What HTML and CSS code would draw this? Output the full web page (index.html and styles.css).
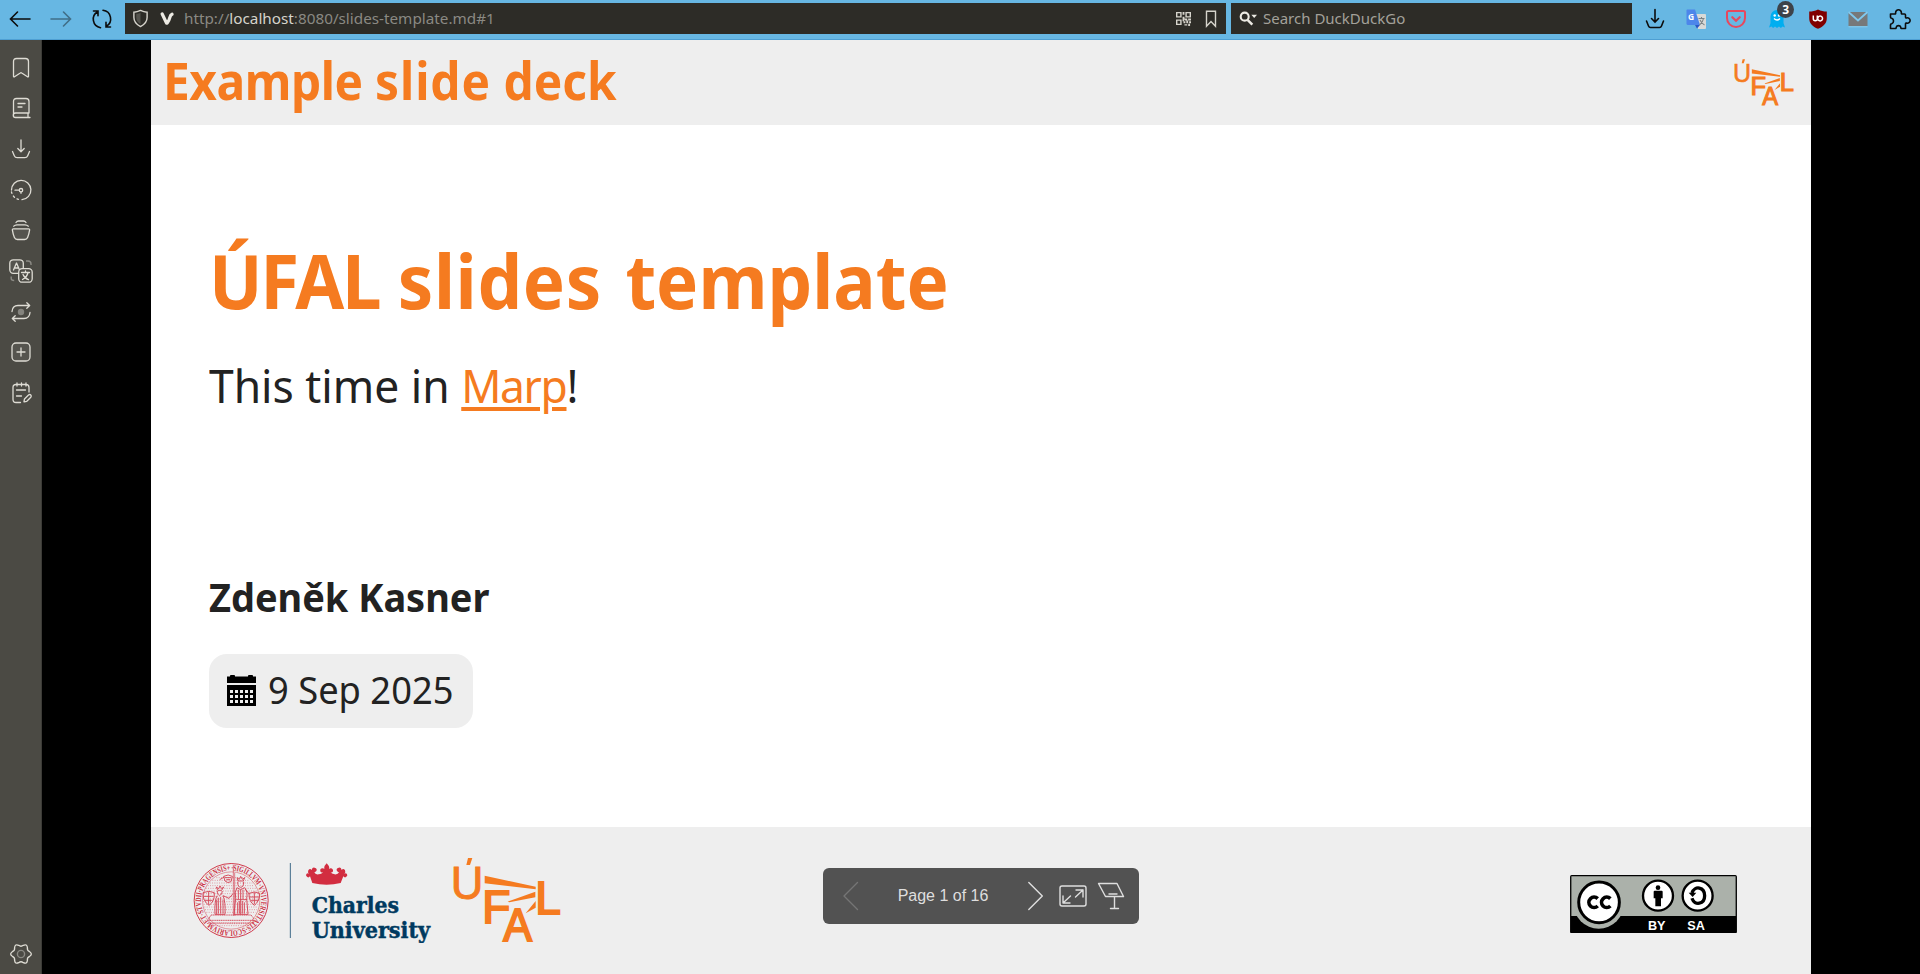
FILE: index.html
```html
<!DOCTYPE html>
<html lang="en">
<head>
<meta charset="utf-8">
<title>ÚFAL slides template</title>
<link rel="stylesheet" href="styles.css">
</head>
<body>
<header class="toolbar">
  <nav class="nav">
    <svg class="i" viewBox="0 0 24 24"><path d="M22 12H2.500M9.500 5l-7 7 7 7"/></svg>
    <svg class="i dim" viewBox="0 0 24 24"><path d="M2 12h19.500M14.500 5l7 7-7 7"/></svg>
    <svg class="i" viewBox="0 0 24 24"><path d="M7.700 4.700A8.600 8.600 0 0 0 10.500 20.700M3.500 4H8v4.800M13 3.300A8.600 8.600 0 0 1 16.300 19.300M20.500 20H16v-4.800"/></svg>
  </nav>
  <div class="urlbar">
    <svg class="i16" viewBox="0 0 18 20"><path d="M9 1.500C6 3 4 3.300 2 3.300V9c0 5 3 7.500 7 9.500 4-2 7-4.500 7-9.500V3.300c-2 0-4-.3-7-1.800z" fill="none" stroke="#d6d4cc" stroke-width="1.500"/><path d="M9 4v12c-3-1.700-4.500-3.800-4.500-7V5C6.500 5 7.800 4.700 9 4z" fill="#55544e"/></svg>
    <svg class="vee" viewBox="0 0 14 13"><path d="M2.200 2l4.300 9M12 2.200C9 3.500 11 6 7.200 11" fill="none" stroke="#eceae3" stroke-width="3.200" stroke-linecap="round"/></svg>
    <span class="url"><span class="fit url-text">http://<b>localhost</b>:8080/slides-template.md#1</span></span>
    <svg class="qr" viewBox="0 0 16 16"><path fill="#d6d4cc" fill-rule="evenodd" d="M0 1h6v6H0zM1.500 2.500v3h3v-3zM10 1h6v6h-6zM11.500 2.500v3h3v-3zM0 9h6v6H0zM1.500 10.500v3h3v-3zM7 1h2v3H7zM7 6h2v3H7zM9 8h3v2H9zM13 8h3v2h-3zM8 11h2v2H8zM11 10h2v3h-2zM14 11h2v2h-2zM9 14h3v1.500H9zM13 13.500h2V16h-2zM7 9h1.500v2H7z"/></svg>
    <svg class="mark" viewBox="0 0 12 18"><path d="M1.500 1.200h9v15L6 11.500l-4.500 4.700z" fill="none" stroke="#d6d4cc" stroke-width="1.400"/></svg>
  </div>
  <div class="search">
    <svg class="mag" viewBox="0 0 20 16"><circle cx="6" cy="5.500" r="4.200" fill="none" stroke="#eceae3" stroke-width="2.200"/><path d="M9 9l5 5" stroke="#eceae3" stroke-width="2.600"/><path d="M13 3.500h6l-3 3.500z" fill="#eceae3"/></svg>
    <span class="fit">Search DuckDuckGo</span>
  </div>
  <div class="ext">
    <svg class="i" viewBox="0 0 24 24"><path d="M12 2.500v12M8.500 11.500L12 15l3.500-3.500M3.500 14l2 5q.6 1.500 2 1.500h9q1.400 0 2-1.500l2-5"/></svg>
    <svg viewBox="0 0 24 24"><path d="M10 7h11a1 1 0 0 1 1 1v13a1 1 0 0 1-1 1h-7z" fill="#d9dad8"/><path d="M3 2.500h8L16 18H4a1.500 1.500 0 0 1-1.500-1.500V3z" fill="#4d86ea"/><path d="M11 18h5l-3 3.500z" fill="#2a56c6"/><text x="4" y="13" font-family="Open Sans, sans-serif" font-weight="700" font-size="8.500" fill="#fff">G</text><path d="M14.500 11.500h6M17.500 10v1.500M19.500 11.500c-.5 3-2 5-4 6.500M16 13c1 2 2.500 4 4.500 5" stroke="#7b8285" stroke-width="1.100" fill="none"/></svg>
    <svg viewBox="0 0 24 24"><path d="M4.500 4h15a1.500 1.500 0 0 1 1.500 1.500V11a9 9 0 0 1-18 0V5.500A1.500 1.500 0 0 1 4.500 4z" fill="none" stroke="#e8475d" stroke-width="2"/><path d="M8.300 10.200l3.700 3.500 3.700-3.500" fill="none" stroke="#e8475d" stroke-width="2.200" stroke-linecap="round"/></svg>
    <span class="ghost"><svg viewBox="0 0 24 24"><path d="M5.500 16V9.500a6.500 6.500 0 0 1 13 0V16l1.500 4.500-2.500-1-1.600 1.500-1.900-1.600-2 1.600-2-1.600L8.100 21l-1.600-1.500-2.500 1z" fill="#00aef0"/><circle cx="9.700" cy="8.500" r="1.200" fill="#fff"/><circle cx="14" cy="8.500" r="1.200" fill="#fff"/><path d="M9 11.500q3 3 6 0" fill="none" stroke="#fff" stroke-width="1.300"/></svg><b class="count">3</b></span>
    <svg viewBox="0 0 24 24"><path d="M12 2.500c3 1.600 5.500 2 8.800 2V11c0 5.500-3.300 8.500-8.800 10.800C6.500 19.500 3.200 16.500 3.200 11V4.500c3.300 0 5.800-.4 8.800-2z" fill="#800000"/><path d="M7.300 8.500v3.200a2 2 0 0 0 4 0V8.500M16.500 11a2.400 2.400 0 1 1-4.700 0 2.400 2.400 0 0 1 4.700 0z" fill="none" stroke="#fff" stroke-width="1.500"/></svg>
    <svg viewBox="0 0 24 24"><path d="M2.500 5h19v14h-19z" fill="#77797a"/><path d="M2.500 5l9.500 8.500L21.500 5" fill="none" stroke="#7fc8ee" stroke-width="1.800"/><path d="M2.500 19.800h19" stroke="#8ccbe9"/></svg>
    <svg class="i" viewBox="0 0 24 24"><path d="M3.500 7h4.200q1.200 0 .9-1.300a2.900 2.900 0 1 1 5.800 0Q14.100 7 15.300 7h2.200q1 0 1 1v2q0 1.200 1.200.9a2.700 2.700 0 1 1 0 5.200q-1.200-.3-1.200.9v4.500h-3.800q-1 0-.9-1.200a2.400 2.400 0 0 0-4.600 0q.1 1.200-.9 1.200H3.500v-3.800q0-1 1.200-1a2.900 2.900 0 0 0 0-5.400q-1.200 0-1.200-1z" stroke-linejoin="round"/></svg>
  </div>
</header>

<div class="body">
  <aside class="side">
    <svg viewBox="0 0 24 24"><path class="t" d="M7.500 2.500h9q3 0 3 3v14.800q0 1-1 .5L12.700 17q-.7-.5-1.400 0l-5.800 3.800q-1 .5-1-.5V5.500q0-3 3-3z"/></svg>
    <svg viewBox="0 0 24 24"><path class="t" d="M20 17H6.500a2 2 0 0 0 0 4.500H21M4.500 19.500v-14q0-3 3-3h9.500q3 0 3 3V17M19 17v4.500M9 7.500h7M9 11h4"/></svg>
    <svg viewBox="0 0 24 24"><path class="n" d="M12 3v11.500M8.800 11.500L12 14.700l3.200-3.200M3.500 14.500l1.800 4.300q.8 1.900 2.800 1.900h7.800q2 0 2.800-1.900l1.800-4.300"/></svg>
    <svg viewBox="0 0 24 24"><path class="n" d="M2.500 12A9.700 9.700 0 1 1 13 21.700"/><path class="n" stroke-dasharray="1.500 3" d="M2.500 14a9.700 9.700 0 0 0 9 7.700"/><path class="n" d="M6 12.200h4M12 14v1.300"/><circle class="n" cx="12" cy="12.200" r="1.700"/></svg>
    <svg viewBox="0 0 24 24"><path class="t" d="M4.500 10.800h15q1.300 0 1.100 1.300-.6 4-2 7.300-.9 2.100-3 2.100H8.400q-2.100 0-3-2.100-1.400-3.300-2-7.300-.2-1.300 1.100-1.300z"/><path class="n" d="M4.800 8.200Q6 6.800 8 6.800h8q2 0 3.200 1.400M7 4.500q1-1.500 2.500-1.500h5Q16 3 17 4.500"/></svg>
    <svg viewBox="0 0 24 24"><rect class="t" x=".8" y=".8" width="13.500" height="13.500" rx="3.500"/><path class="n" d="M4.500 11L7.500 4l3 7M5.500 9h4"/><path class="g" d="M17 2h2q3 0 3 3v1M2.200 17.500v2q0 2 3 2"/><rect x="9.700" y="9.700" width="13.500" height="13.500" rx="3.500" fill="#4b4a44" stroke="#dedcd4" stroke-width="1.300"/><path class="n" d="M12.500 13.500h8M16.500 12v1.500M19 13.500c-.6 3-2.500 5.500-5.500 7M14 15.500c1 2.500 3 4.300 5.500 5.200"/></svg>
    <svg viewBox="0 0 24 24"><path class="n" d="M3 11.500Q3.500 5.500 9 5.500h11.500M17.800 2.800l2.900 2.700-2.900 2.700M21 12.500q-.5 6-6 6H3.500M6.200 15.800l-2.900 2.700 2.900 2.700"/><circle cx="12" cy="12" r="3.200" fill="#85847e"/></svg>
    <svg viewBox="0 0 24 24"><rect class="t" x="3" y="3" width="18" height="18" rx="4"/><path class="n" d="M12 8v8M8 12h8"/></svg>
    <svg viewBox="0 0 24 24"><path class="n" d="M11.500 21.500H7q-3 0-3-3v-12q0-3 3-3h10q3 0 3 3V11M8 2v3M12.500 2v3M17 2v3M7.500 9h9M7.500 15h5M15 20.500l.5-2.500 4-4q1.300-1 2.300 0t0 2.300l-4 4-2.700.6z"/></svg>
    <svg class="gear" viewBox="0 0 24 24"><path class="n" d="M20.700 14.300Q17.900 15.400 18.400 18.400Q18 22.400 14.300 20.700Q12 18.800 9.700 20.700Q6 22.400 5.600 18.400Q6.100 15.400 3.300 14.300Q0 12 3.300 9.700Q6.100 8.600 5.600 5.600Q6 1.600 9.700 3.300Q12 5.200 14.300 3.300Q18 1.600 18.400 5.600Q17.900 8.600 20.700 9.700Q24 12 20.700 14.300z"/><circle class="g" cx="12" cy="12" r="3.600"/></svg>
  </aside>

  <main class="stage">
    <article class="slide">
      <header class="top">
        <span class="fit deck"><span class="snug">Example</span> <span class="loose">slide</span> deck</span>
        <svg class="logo-s" viewBox="820 37 322 255">
          <g class="ufal"><text x="813" y="162" class="thin" textLength="98" lengthAdjust="spacingAndGlyphs">U</text><text x="908" y="235">F</text><text x="971" y="288" textLength="86" lengthAdjust="spacingAndGlyphs">A</text><text x="1067" y="208">L</text></g>
          <path class="rays" d="M865 39h13l-7 21h-11zM915 92l153 33v8l-153-18zM984 170l83-30v17l-78 15zM1068 168v20l-30 17z"/>
        </svg>
      </header>
      <section class="content">
        <h1><span class="fit h1t"><span class="w1">ÚFAL</span> <span class="w2">slides</span> template</span></h1>
        <p class="lead"><span class="fit leadt">This time in <a href="#">Marp</a>!</span></p>
        <p class="author"><span class="fit authort">Zdeněk Kasner</span></p>
        <div class="date">
          <svg class="cal" viewBox="0 0 29 32"><path fill-rule="evenodd" d="M0 1.500h3V.8Q3 0 4 0h3q1 0 1 .8v.7h13V.8Q21 0 22 0h3q1 0 1 .8v.7h3V8H0zM0 10h29v21H0zM3 15v3h3v-3zm5 0v3h3v-3zm5 0v3h3v-3zm5 0v3h3v-3zm5 0v3h3v-3zM3 20v3h3v-3zm5 0v3h3v-3zm5 0v3h3v-3zm5 0v3h3v-3zm5 0v3h3v-3zM3 25v3h3v-3zm5 0v3h3v-3zm5 0v3h3v-3zm5 0v3h3v-3zm5 0v3h3v-3z"/></svg>
          <span class="fit datet">9 Sep 2025</span>
        </div>
      </section>
      <footer class="foot">
        <svg class="logos" viewBox="40 36 1104 258">
          <g fill="none" stroke="#d03a4b">
            <circle cx="154.500" cy="166.500" r="111" stroke-width="3"/>
            <circle cx="154.500" cy="166.500" r="86" stroke-width="1.500"/>
          </g>
          <path id="ring" d="M154.500 76.500a90 90 0 0 1 0 180a90 90 0 0 1 0-180" fill="none"/>
          <text class="seal"><textPath href="#ring" textLength="562" lengthAdjust="spacingAndGlyphs">·SIGILLVM·VNIVERSITATIS·SCOLARIVM·ET·STVDII·PRAGENSIS+</textPath></text>
          <g fill="none" stroke="#d34556" stroke-width="2.800">
            <path stroke-width="1.500" stroke-dasharray="3 4" d="M110 98h88M98 106h112M90 114h128M84 122h138M78 130h152M74 138h158M72 146h164M70 154h168M70 162h168M70 170h168M72 178h164M74 186h160M76 194h156M80 202h148M86 236h134M98 242h112"/>
            <path d="M161 60v152M165 84v128" stroke-width="2"/>
            <path d="M88 220l6-10h120l8 10v14H88zM90 226h130" stroke-dasharray="4 1.500"/>
            <path d="M70 143q18-8 34 0 2 26-16 38-19-12-18-38zM87 140v38M72 154h30M75 166h24M208 145q16-8 32 0 0 24-16 36-17-12-16-36zM224 142v36M209 156h29M213 166h24"/>
            <path d="M110 126l4 10h12l6-10-6 5-5-8-4 8zM113 138q0 13 7 13t8-13M112 152q-8 16-6 56h30q2-38-6-56l18 8 12-14M111 164v44M116 158v48M123 156v50M130 164v42"/>
            <path d="M172 98l3 10h16l4-10-7 5-5-9-4 9zM174 110q0 17 9 17t9-17M172 128q-8 12-4 32l-5 48h42l-4-48q4-20-6-32l-12 6zM176 134v28M183 134v74M190 134v28M170 164h32M174 172v34M179 168v38M188 168v38M194 172v34M196 132l14 16"/>
            <path d="M132 94q14-8 26 0l-4 16q-10 6-18-2zM136 98h18M140 104h12M120 104l14-8"/>
          </g>
          <path d="M332 54v225" stroke="#3f6a88" stroke-width="3"/>
          <path fill="#d22d40" d="M398 114l-7-20q-4 5-8 2-6-3-3-9 5-4 8 0-5-5-2-11 5-8 10-1 2-9 9-7 9 3 5 10-2 3-6 4 3 8 13 6 11-1 12-7-5 3-7-2-2-9 7-9 3 0 5 2-1-6 1-10l6-7 6 7q3 4 1 10 2-2 5-2 8 1 7 9-2 5-7 2 2 6 12 7 10 1 13-6-4-1-6-4-4-7 5-10 7-2 9 7 5-7 10 1 3 6-2 11 3-4 8 0 3 6-3 9-4 3-8-2l-8 20q-42 10-85 0z"/>
          <g class="cu"><text x="396" y="204" textLength="262" lengthAdjust="spacingAndGlyphs">Charles</text><text x="396" y="278" textLength="355" lengthAdjust="spacingAndGlyphs">University</text></g>
          <g class="ufal"><text x="813" y="162" class="thin" textLength="98" lengthAdjust="spacingAndGlyphs">U</text><text x="908" y="235">F</text><text x="971" y="288" textLength="86" lengthAdjust="spacingAndGlyphs">A</text><text x="1067" y="208">L</text></g>
          <path class="rays" d="M865 39h13l-7 21h-11zM915 92l153 33v8l-153-18zM984 170l83-30v17l-78 15zM1068 168v20l-30 17z"/>
        </svg>
        <svg class="cc" viewBox="0 0 501 175">
          <rect width="501" height="175" rx="5"/>
          <path fill="#abb1aa" d="M4 4h493v119H4z"/>
          <circle cx="86" cy="85" r="76" fill="#abb1aa"/>
          <circle cx="87" cy="82" r="61" fill="#fff" stroke="#000" stroke-width="9"/>
          <path fill="none" stroke="#000" stroke-width="11" d="M83 71a15.500 15.500 0 1 0 0 22M121 71a15.500 15.500 0 1 0 0 22"/>
          <circle cx="264" cy="62" r="45" fill="#fff" stroke="#000" stroke-width="7"/>
          <circle cx="264" cy="38" r="7"/><path d="M254 47h21q3 0 3 3v20h-5v24h-17V70h-5V50q0-3 3-3z"/>
          <circle cx="383" cy="62" r="45" fill="#fff" stroke="#000" stroke-width="7"/>
          <path fill="none" stroke="#000" stroke-width="10" d="M366 54c8-24 38-18 38 8s-30 32-38 8"/><path d="M356 53h23l-11 13z"/>
          <g fill="#fff" font-family="Liberation Sans, Arial, sans-serif" font-weight="700" font-size="38"><text x="234" y="164" textLength="52">BY</text><text x="352" y="164" textLength="53">SA</text></g>
        </svg>
      </footer>
    </article>
    <div class="osc">
      <svg class="osc-svg" viewBox="0 0 40 56"><path opacity=".25" d="M34.500 14.500L21 28l13.500 13.500"/></svg>
      <span class="page">Page 1 of 16</span>
      <svg class="osc-svg" viewBox="0 0 30 56"><path d="M5.800 14.500L19.300 28 5.800 41.500"/></svg>
      <svg class="osc-svg" viewBox="0 0 40 56"><rect x="7" y="18" width="26" height="20" rx="2"/><path d="M23 22h7v7M30 22l-7.500 7M17 35h-7v-7M10 35l7.500-7"/></svg>
      <svg class="osc-svg" viewBox="0 0 40 56"><path d="M5.500 15.500H24L30.500 28.500h-18zM16 26h8M21.500 29v11.500M17.500 40.500h8"/></svg>
    </div>
  </main>
</div>
</body>
</html>
```
FILE: styles.css
```css
* { box-sizing: border-box; }
html, body { height: 100%; overflow: hidden; }
body { margin: 0; display: flex; flex-direction: column; background: #000; font-family: "Noto Sans", "Open Sans", sans-serif; }
svg { display: block; flex: none; }
.fit { display: inline-block; white-space: nowrap; transform-origin: 0 50%; }

.toolbar { flex: none; height: 40px; display: flex; align-items: flex-start; padding-top: 3px; background: #67b7e3; border-bottom: 1px solid #4e9fd3; }
.nav { width: 125px; height: 31px; padding-left: 8px; display: flex; align-items: center; gap: 17px; }
.nav svg { width: 24px; height: 24px; }
.i path { fill: none; stroke: #0c0c0c; stroke-width: 1.6; stroke-linecap: round; }
.dim { opacity: .42; }
.urlbar, .search { height: 31px; background: #2d2c27; display: flex; align-items: center; color: #8a8983; font-size: 15px; line-height: 31px; }
.urlbar { width: 1101px; padding-left: 7px; }
.i16 { width: 17px; height: 19px; }
.vee { width: 14px; height: 13px; margin-left: 11px; }
.url { flex: 1; padding-left: 10px; }
.url-text { transform: scaleX(1.018); }
.url b { font-weight: 400; color: #d6d4cc; }
.qr { width: 15px; height: 15px; margin-right: 14px; }
.mark { width: 12px; height: 18px; margin-right: 9px; }
.search { margin-left: 5px; width: 401px; padding-left: 8px; color: #a3a19a; }
.mag { width: 19px; height: 16px; margin-right: 5px; }
.ext { flex: 1; height: 31px; display: flex; align-items: center; padding-left: 11px; gap: 16.700px; }
.ext svg { width: 24px; height: 24px; }
.ghost { position: relative; }
.count { position: absolute; left: 12px; top: -6px; width: 17px; height: 17px; border-radius: 50%; background: #3d434a; color: #fff; font-size: 12px; line-height: 17px; text-align: center; }

.body { flex: 1; min-height: 0; display: flex; }
.side { width: 42px; flex: none; background: #4b4a44; border-right: 1px solid #3c3b37; padding: 15.500px 0 8px 8.500px; display: flex; flex-direction: column; gap: 16.700px; }
.side svg { width: 24px; height: 24px; }
.side .gear { margin-top: auto; }
.n, .t { fill: none; stroke: #dedcd4; stroke-width: 1.3; stroke-linecap: round; stroke-linejoin: round; }
.t { fill: #55544e; }
.g { fill: none; stroke: #8b8a84; stroke-width: 1.4; }

.stage { flex: 1; display: flex; justify-content: center; position: relative; }
.slide { width: 1660.500px; background: #fff; color: #222; display: flex; flex-direction: column; }
.top { height: 85px; background: #eee; display: flex; align-items: center; justify-content: space-between; padding: 0 17px 0 12.500px; }
.deck { font-size: 52px; font-weight: 700; color: #f57b20; line-height: 80px; padding-bottom: 5px; transform: scaleX(.92); }
.snug { letter-spacing: -.5px; }
.loose { letter-spacing: 1px; }
.logo-s { width: 60px; height: 47px; }
.content { flex: 1; padding: 110px 58.500px 0; }
h1, p { margin: 0; }
h1 { font-size: 76px; line-height: 90px; color: #f57b20; }
.h1t { transform: scaleX(.932); }
.w1 { letter-spacing: -2.5px; }
.w2 { letter-spacing: .65px; margin-right: 5.500px; }
.lead { font-size: 45px; line-height: 60px; margin-top: 31px; }
.leadt { transform: scaleX(.986); }
.lead a { color: #f57b20; letter-spacing: -1.4px; text-decoration-thickness: 4px; text-underline-offset: 4px; }
.author { font-size: 40px; line-height: 50px; font-weight: 700; margin-top: 156px; }
.authort { transform: scaleX(.948); }
.date { width: 264px; height: 74px; margin-top: 32px; background: #eee; border-radius: 18px; display: flex; align-items: center; padding-left: 18px; gap: 12px; font-size: 37.500px; line-height: 73px; }
.datet { transform: scaleX(.968); padding-bottom: 3px; }
.cal { width: 29px; height: 32px; }
.foot { height: 147px; background: #eee; display: flex; justify-content: space-between; padding: 30px 74px 0 42px; }
.logos { width: 368px; height: 86px; }
.ufal { font: 138px "Liberation Sans", Arial, sans-serif; fill: #f57b20; stroke: #f57b20; stroke-width: 6px; }
.thin { font-size: 141px; stroke-width: 3px; }
.rays { fill: #f57b20; }
.seal { font: 700 25px "Liberation Serif", serif; fill: #cc2c3f; }
.cu { font: 700 69px "DejaVu Serif", serif; fill: #003a60; stroke: #003a60; stroke-width: 1.5px; }
.cc { width: 167px; height: 58.300px; margin-top: 18px; }

.osc { position: absolute; left: 781px; top: 828px; width: 316px; height: 56px; border-radius: 6px; background: #525252; color: #dedede; display: flex; align-items: center; font: 16px "Liberation Sans", Arial, sans-serif; }
.osc-svg { height: 56px; width: auto; fill: none; stroke: #dedede; stroke-width: 1.4; stroke-linecap: round; stroke-linejoin: round; }
.page { width: 160px; text-align: center; }
```
